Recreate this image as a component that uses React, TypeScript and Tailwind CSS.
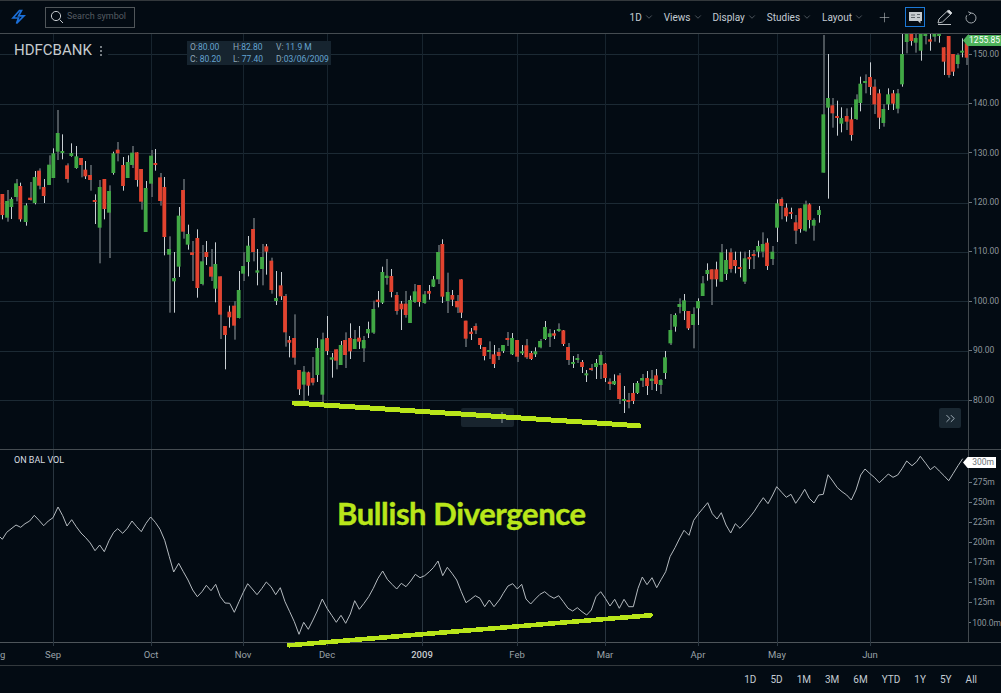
import { ChevronDown, ChevronsRight, Plus } from 'lucide-react'

// [x, wickTop, wickBottom, bodyTop, bodyBottom, green] in crop coordinates, converted below
type Raw = [number, number, number, number, number, number]

const seg1: Raw[] = [
  [7,282,358,282,345,0],[21,270,365,303,353,1],[34,292,357,297,321,1],[48,237,304,250,291,1],[61,248,365,258,358,0],
  [77,310,377,316,366,1],[90,246,302,293,300,0],[104,213,313,231,309,1],[117,205,268,212,257,0],[131,237,309,261,288,0],
  [147,166,255,194,255,1],[160,145,234,160,234,1],[173,30,180,99,155,1],[187,103,178,153,159,1],[201,190,248,196,237,0],
  [214,130,170,159,168,1],[229,138,206,169,204,1],[243,174,232,174,195,0],[256,183,237,209,229,0],[270,195,272,225,240,0],
  [284,283,372,300,306,0],[299,240,490,261,383,1],[313,237,358,237,327,0],[327,256,474,273,338,1],[340,155,224,160,219,1],
  [353,126,184,149,160,0],[369,171,272,195,258,0],[383,166,234,186,234,1],[396,138,204,158,195,1],[410,157,260,157,240,0],
  [423,207,329,207,305,0],[437,243,396,264,396,1],[453,150,291,167,251,1],[466,147,212,189,195,0],[480,219,317,232,303,0],
  [493,231,466,261,411,0],[507,409,638,447,464,1],[522,456,638,534,544,1],[536,321,531,347,500,1],[549,237,416,270,395,0],
  [563,374,449,402,434,1],[576,423,543,457,465,0],[592,388,593,414,564,0],[606,435,556,484,552,1],[619,423,495,456,471,0],
  [633,447,543,500,530,0],[646,427,607,492,566,1],[660,529,717,529,644,0],[675,678,808,678,705,0],[688,617,683,635,652,0],
  [702,603,719,617,677,0],[716,513,655,570,654,1],[729,456,543,498,521,1],[744,408,529,437,486,1],[759,354,484,387,456,0],
  [772,447,556,511,518,1],[786,432,556,471,507,1],[799,432,524,439,455,0],[814,473,581,482,570,0],[828,513,615,594,603,1],
  [842,516,600,556,589,0],[855,582,740,588,697,0],[868,708,772,720,728,0],[882,643,794,714,773,0],[897,810,885,810,868,0],
  [911,798,902,815,854,1],[925,815,887,817,857,0],[938,771,856,834,848,0],[952,714,846,744,825,1],[967,698,910,718,884,1],
  [981,648,765,714,753,0],[995,759,833,772,779,1],
]

const seg2: Raw[] = [
  [138,358,418,358,392,0],[152,333,405,345,405,1],[165,307,414,330,375,0],[180,280,387,324,364,0],[194,300,357,327,357,1],
  [207,288,357,323,335,0],[221,318,396,330,355,1],[234,275,324,297,310,1],[250,212,312,237,308,1],[263,183,232,209,216,0],
  [277,110,222,126,218,1],[290,87,164,137,144,1],[304,117,202,138,186,0],[320,186,254,195,243,0],[334,213,300,221,238,0],
  [347,183,263,221,255,0],[360,197,279,210,279,1],[374,162,219,184,216,1],[387,165,230,165,216,0],[403,183,222,193,219,1],
  [417,165,209,183,191,0],[430,138,171,148,170,1],[444,45,162,66,148,1],[457,28,219,42,200,0],[473,128,249,186,213,1],
  [487,180,228,195,209,0],[501,195,249,213,232,0],[513,148,264,148,248,0],[527,272,351,272,326,0],[543,294,330,305,312,0],
  [556,280,312,288,301,0],[570,324,357,324,345,0],[583,351,391,351,378,0],[597,334,387,360,366,1],[611,345,414,373,402,0],
  [626,354,390,366,378,0],[639,345,369,345,363,1],[652,306,348,324,330,0],[666,309,375,324,373,1],[681,330,396,330,380,0],
  [696,345,375,364,370,1],[709,327,387,346,382,0],[723,363,390,369,387,0],[736,352,381,364,373,1],[750,327,355,333,352,1],
  [765,273,330,291,327,1],[779,297,351,310,321,1],[792,300,327,310,317,0],[806,280,306,297,303,1],[820,300,348,301,342,0],
  [834,339,405,351,390,0],[849,378,414,396,402,1],[862,372,399,384,390,1],[876,390,429,396,411,0],[889,420,456,430,436,1],
  [903,402,423,414,420,0],[918,387,447,399,411,1],[932,363,447,375,405,1],[945,399,456,401,444,0],[959,445,480,455,462,0],
  [972,433,465,453,463,1],[987,429,522,436,507,0],[1002,468,549,507,513,1],[1015,489,535,510,516,0],[1029,459,522,489,513,0],
  [1042,453,492,459,489,1],[1056,432,471,444,452,1],[1071,423,495,444,468,0],[1085,420,480,446,453,1],[1098,417,483,436,462,0],
  [1112,447,492,450,465,1],[1125,363,447,382,429,1],
]

const seg3: Raw[] = [
  [46,87,180,135,175,1],[60,85,140,90,125,1],[73,40,85,57,66,1],[87,27,105,46,78,1],[100,78,135,78,130,0],[114,67,190,87,120,1],[129,40,120,48,70,1],
]

const seg4: Raw[] = [
  [158,738,798,760,798,1],[172,700,752,720,732,1],[185,718,825,718,748,0],[199,695,770,718,748,0],[214,642,755,667,755,1],
  [228,658,750,690,732,1],[242,655,728,667,717,0],[255,665,730,690,708,0],[269,665,742,711,717,0],[284,665,762,685,755,1],
  [298,660,717,681,688,0],[311,660,717,672,678,0],[324,632,682,648,665,1],[338,607,682,642,665,1],[351,625,720,638,708,0],
  [367,648,705,665,687,1],[381,508,636,520,593,1],[394,502,568,507,528,0],[408,520,575,533,559,0],[422,533,567,546,552,0],
  [437,555,642,577,602,0],[450,535,608,535,597,0],[465,512,605,523,602,1],[478,520,595,523,570,0],[491,565,632,570,587,1],
  [507,528,578,540,555,1],[520,15,428,253,428,1],[534,72,506,204,233,1],[547,204,293,226,250,0],[561,212,317,258,264,0],
  [574,232,307,264,281,1],[590,235,300,258,275,0],[604,232,332,268,315,0],[618,193,270,208,267,1],[631,140,244,161,219,1],
  [645,133,190,153,156,1],[660,97,195,141,171,0],[673,148,252,170,223,0],[687,178,297,190,263,0],[700,222,290,237,279,1],
  [714,175,240,193,223,1],[729,180,240,190,221,0],[743,177,250,190,236,1],[756,12,170,72,163,1],[770,12,70,12,36,1],
  [784,12,47,12,33,0],[797,12,68,24,38,1],[812,12,92,12,62,1],[826,12,43,12,16,1],[840,12,62,28,35,0],
  [853,12,35,12,20,1],[867,12,38,12,14,1],[881,52,135,52,95,0],[896,18,143,18,135,0],[909,72,138,72,125,0],
  [923,70,115,75,102,1],[936,25,82,62,68,1],[950,30,105,40,83,0],
]

const toPage = (rows: Raw[], ox: number, oy: number) =>
  rows.map(([x, wt, wb, bt, bb, g]) => ({
    x: x / 3 + ox,
    wt: wt / 3 + oy,
    wb: wb / 3 + oy,
    bt: bt / 3 + oy,
    bb: bb / 3 + oy,
    up: g === 1,
  }))

const candles = [
  ...toPage(seg1, 0, 100),
  ...toPage(seg2, 290, 230),
  ...toPage(seg3, 655, 285),
  ...toPage(seg4, 650, 30),
]

const obvLeft = [
  0,276,7,283,20,262,48,240,62,247,75,236,89,228,103,211,117,226,131,242,145,228,159,218,174,186,188,212,201,243,215,224,229,245,243,264,257,278,271,294,285,317,299,300,313,320,327,287,341,262,353,251,368,265,382,250,396,228,410,245,424,260,438,235,452,216,466,232,480,253,494,286,508,335,521,381,536,355,550,380,564,405,578,435,592,455,606,440,619,421,633,437,647,418,661,455,675,474,689,475,703,502,717,470,730,442,743,416,757,432,771,449,785,431,799,411,813,425,827,449,841,428,855,470,869,500,883,530,897,568,911,532,925,553,939,525,953,495,967,462,981,490,995,511,1009,532,1023,511,1037,535,1051,507,1064,467,1078,493,1092,475,1106,455,1120,430,1134,400,1148,378,1162,403,1176,418,1190,432,1204,415,1218,425,1232,408,1246,388,1260,398,1274,392,1288,380,1300,368,1314,348,1328,392,1342,367,1356,385,1370,405,1384,440,1398,473,1412,463,1426,452,1440,460,1454,485,1468,465,1482,485,
]
const obvRight = [
  0,462,10,445,24,423,38,416,52,432,65,418,78,462,92,477,106,462,120,448,134,440,148,452,162,460,176,452,190,470,204,490,218,498,232,488,246,500,260,510,274,495,288,455,302,440,316,460,330,483,344,463,358,490,372,463,386,485,400,485,414,430,427,396,441,419,456,398,470,428,484,403,497,380,510,335,525,308,538,282,552,256,567,271,581,226,595,207,609,190,623,173,637,206,651,222,664,203,678,240,692,264,706,236,720,250,734,234,748,218,762,200,776,178,790,158,804,176,818,150,830,125,845,142,859,157,873,148,887,175,901,155,914,133,928,160,942,174,956,150,970,148,984,89,998,108,1012,128,1026,140,1040,150,1054,165,1068,135,1082,90,1095,72,1110,86,1124,98,1138,113,1152,100,1165,87,1179,97,1193,90,1207,70,1220,48,1236,62,1250,50,1261,34,1277,55,1291,74,1304,64,1318,78,1332,92,1346,107,1360,85,1374,62,1388,41,
]

const pairs = (vals: number[], ox: number, oy: number) => {
  const out: string[] = []
  for (let i = 0; i < vals.length; i += 2) {
    out.push(`${(vals[i] / 3 + ox).toFixed(1)},${(vals[i + 1] / 3 + oy).toFixed(1)}`)
  }
  return out
}
const obvPoints = [...pairs(obvLeft, 0, 445), ...pairs(obvRight, 500, 445)].join(' ')

const gridX = [53, 151, 243, 327, 422, 517, 605, 698, 777, 870]
const gridY = [54, 104, 153, 203, 252, 301, 351, 400]
const prices = ['150.00', '140.00', '130.00', '120.00', '110.00', '100.00', '90.00', '80.00']
const volumes = ['275m', '250m', '225m', '200m', '175m', '150m', '125m', '100.0m']
const months = ['Sep', 'Oct', 'Nov', 'Dec', '2009', 'Feb', 'Mar', 'Apr', 'May', 'Jun']
const ranges = ['1D', '5D', '1M', '3M', '6M', 'YTD', '1Y', '5Y', 'All']
const menus = ['1D', 'Views', 'Display', 'Studies', 'Layout']

function Candles() {
  return (
    <>
      {candles.map((c, i) => {
        const bright = (i + Math.floor((i + 6) / 11)) % 2 === 0
        return (
          <g key={i}>
            {bright ? (
              <rect x={Math.round(c.x)} y={c.wt} width={1} height={c.wb - c.wt} fill="#c9cfd3" />
            ) : (
              <rect x={Math.floor(c.x)} y={c.wt} width={2} height={c.wb - c.wt} fill="#4c545a" />
            )}
            <rect x={c.x - 1.9} y={c.bt} width={3.8} height={Math.max(c.bb - c.bt, 2)} fill={c.up ? '#41a845' : '#e2432f'} />
          </g>
        )
      })}
    </>
  )
}

function Quote({ label, value }: { label: string; value: string }) {
  return (
    <span>
      <span className="text-[#8fa6b6]">{label}</span>
      {value}
    </span>
  )
}

export default function App() {
  return (
    <div className="flex h-[693px] w-[1001px] flex-col overflow-hidden bg-[#030b13] font-['Roboto',sans-serif] text-[#aeb5bb]">
      <header className="flex h-[34px] shrink-0 items-center border-y border-t-[#33383c] border-b-[#454c51] pr-[24px]">
        <svg className="ml-[11px] h-[16px] w-[15px]" viewBox="0 0 15 16" fill="none" stroke="#1b6fd8" strokeWidth="1.7" strokeLinejoin="miter">
          <path d="M8.5 1.5 L2 9 H7.5 L5.5 14.5 L13 6.8 H7.6 L10.5 1.5 Z" />
        </svg>
        <div className="ml-[19px] flex h-[21px] w-[90px] items-center gap-[3px] border border-[#50565a] pl-[4px]">
          <svg className="h-[14px] w-[14px]" viewBox="0 0 14 14" fill="none" stroke="#c4c9cd" strokeWidth="1">
            <circle cx="6" cy="6" r="4.6" />
            <path d="M9.5 9.5 L13 13" />
          </svg>
          <span className="text-[9px] text-[#555c62]">Search symbol</span>
        </div>
        <nav className="ml-auto flex items-center gap-[10px]">
          {menus.map((m) => (
            <div key={m} className="flex items-center gap-[2px] text-[10px] text-[#c3ccd4]">
              {m}
              <ChevronDown size={10} strokeWidth={1.3} className="text-[#8a9299]" />
            </div>
          ))}
        </nav>
        <Plus size={15} strokeWidth={1} className="ml-[13px] text-[#b0b5b9]" />
        <div className="ml-[13px] flex h-[20px] w-[20px] items-center justify-center border border-[#1b78d6]">
          <svg className="h-[13px] w-[15px]" viewBox="0 0 15 13">
            <path d="M1 1 H14 V10 H12.5 V12.5 L10 10 H1 Z" fill="#c6ccd0" />
            <path d="M3 4 H7 M3 6.5 H7 M9 3.5 H12 M9 6.5 H12" stroke="#5e666c" strokeWidth="1" />
          </svg>
        </div>
        <svg className="ml-[11px] h-[18px] w-[18px]" viewBox="0 0 18 18" fill="none" stroke="#b8bdc1" strokeWidth="1">
          <path d="M2 15 L3 11 L12 2.5 L15.5 5.5 L6.5 14 Z" />
          <path d="M11 3.5 L14.5 6.5 L16 5 L13 2 Z" fill="#d8dcdf" />
          <path d="M2 16.5 H15" />
        </svg>
        <svg className="ml-[11px] h-[13px] w-[12px]" viewBox="0 0 12 13" fill="none" stroke="#a3a9ae" strokeWidth="1">
          <path d="M6 2 A5 5 0 1 1 1.8 4.3" />
          <path d="M3.2 0.8 L6 2 L3.8 4" />
        </svg>
      </header>

      <section className="relative flex h-[415px] shrink-0">
        <svg className="block h-[415px] w-[968px] shrink-0" viewBox="0 34 968 415">
          {gridY.map((y) => (
            <rect key={y} x={0} y={y} width={968} height={1} fill="#1c2a34" />
          ))}
          {gridX.map((x) => (
            <rect key={x} x={x} y={34} width={1} height={415} fill="#17242e" />
          ))}
          <Candles />
          <rect x={461} y={408} width={53} height={19} rx={2} fill="#18242e" />
          <path d="M502 412 V423 M499 417 H505" stroke="#6a757d" strokeWidth="1.5" />
          <line x1={294} y1={403} x2={639} y2={425.8} stroke="#b9e61a" strokeWidth={5} strokeLinecap="round" shapeRendering="crispEdges" />
        </svg>
        <aside className="flex w-[33px] shrink-0 flex-col gap-[37.45px] border-l border-[#42494e] pt-[14px] text-[8.5px] text-[#8e969c]">
          {prices.map((p) => (
            <div key={p} className="flex h-[12px] items-center gap-[1px]">
              <span className="h-px w-[3px] bg-[#6d757b]" />
              {p}
            </div>
          ))}
        </aside>

        <div className="absolute top-[8px] left-[14px] flex h-[17px] items-center gap-[8px] bg-[#030b13] pr-[6px] text-[15px] leading-none text-[#c6cbcf]">
          HDFCBANK
          <span className="flex flex-col gap-[2px]">
            <i className="block h-[2px] w-[2px] bg-[#767d83]" />
            <i className="block h-[2px] w-[2px] bg-[#767d83]" />
            <i className="block h-[2px] w-[2px] bg-[#767d83]" />
          </span>
        </div>
        <div className="absolute top-[7px] left-[187px] grid h-[24px] w-[144px] grid-cols-[43px_43px_52px] items-center bg-[#16242f] pl-[3px] text-[8.5px] leading-none text-[#64a3d0]">
          <Quote label="O:" value="80.00" />
          <Quote label="H:" value="82.80" />
          <Quote label="V:" value=" 11.9 M" />
          <Quote label="C:" value=" 80.20" />
          <Quote label="L:" value=" 77.40" />
          <Quote label="D:" value="03/06/2009" />
        </div>
        <div className="absolute top-[1px] right-0 flex h-[11px] w-[38px] items-center justify-end bg-[#4db25a] pr-[1px] text-[8.5px] text-white [clip-path:polygon(0_50%,12%_0,100%_0,100%_100%,12%_100%)]">
          1255.85
        </div>
        <div className="absolute top-[374px] left-[939px] flex h-[20px] w-[22px] items-center justify-center rounded-[2px] bg-[#1a2832]">
          <ChevronsRight size={15} strokeWidth={1.5} className="text-[#a5b3bd]" />
        </div>
      </section>

      <section className="relative flex h-[193px] shrink-0 border-t border-[#454c51]">
        <svg className="block h-[192px] w-[968px] shrink-0 overflow-visible" viewBox="0 450 968 192">
          {gridX.map((x) => (
            <rect key={x} x={x} y={450} width={1} height={196} fill="#2a3640" />
          ))}
          <polyline points={obvPoints} fill="none" stroke="#b4babf" strokeWidth={1} />
          <line x1={289} y1={645.3} x2={650.5} y2={615.3} stroke="#b9e61a" strokeWidth={4.6} strokeLinecap="round" shapeRendering="crispEdges" />
        </svg>
        <aside className="flex w-[33px] shrink-0 flex-col gap-[10.14px] border-l border-[#42494e] pt-[27px] text-[8.5px] text-[#8e969c]">
          {volumes.map((v) => (
            <div key={v} className="flex h-[10px] items-center gap-[1px]">
              <span className="h-px w-[3px] bg-[#6d757b]" />
              {v}
            </div>
          ))}
        </aside>
        <span className="absolute top-[5px] left-[14px] text-[9px] leading-[10px] text-[#d8dde0]">ON BAL VOL</span>
        <h2 className="absolute top-[42px] left-[337px] font-['Lato',sans-serif] text-[31px] leading-[42px] font-bold tracking-[-0.4px] whitespace-nowrap text-[#b9e61a] [-webkit-text-stroke:0.4px_#b9e61a]">
          Bullish Divergence
        </h2>
        <div className="absolute top-[7px] left-[963px] flex h-[11px] w-[33px] items-center justify-end bg-white pr-[2px] text-[8.5px] text-[#6d7378] [clip-path:polygon(0_50%,14%_0,100%_0,100%_100%,14%_100%)]">
          300m
        </div>
      </section>

      <div className="grid h-[23px] shrink-0 grid-cols-[53px_98px_92px_84px_95px_95px_88px_93px_79px_93px_1fr] items-center border-t border-[#4e555a] pt-[2px] text-[9.5px] text-[#9aa2a8]">
        <span>g</span>
        {months.map((m) => (
          <span key={m} className={m === '2009' ? 'w-fit -translate-x-1/2 font-medium text-[#c6cbcf]' : 'w-fit -translate-x-1/2'}>
            {m}
          </span>
        ))}
      </div>

      <footer className="flex flex-1 items-center justify-end gap-[14px] border-t border-[#33393d] pr-[24px] pb-[1px] text-[10px] text-[#c3ccd4]">
        {ranges.map((r) => (
          <span key={r}>{r}</span>
        ))}
      </footer>
    </div>
  )
}
